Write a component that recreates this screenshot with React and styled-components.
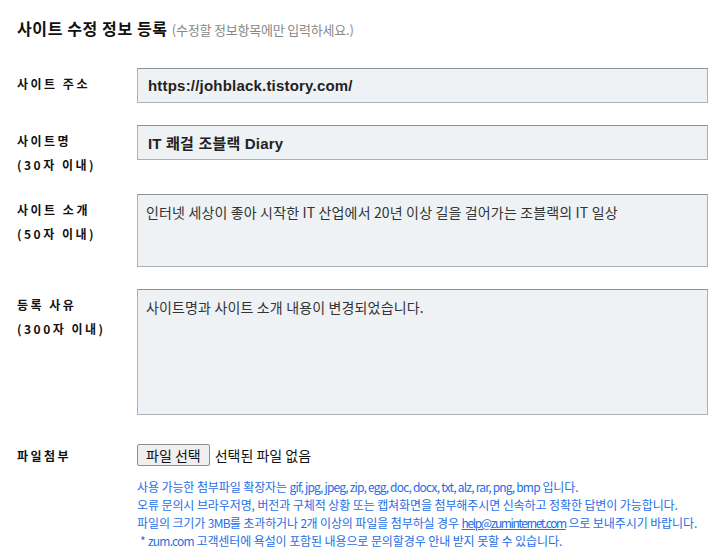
import React from "react";
import styled, { createGlobalStyle } from "styled-components";

const Global = createGlobalStyle`
  html, body { margin: 0; padding: 0; background: #fff; overflow: hidden; }
  body { font-family: "Noto Sans CJK KR", "Noto Sans", sans-serif; color: #111; }
`;

const Page = styled.div`
  padding: 18px 15px 0 17px;
`;

const Title = styled.h2`
  margin: 0 0 28px;
  font-size: 16px;
  line-height: 20px;
  font-weight: 700;
  color: #111;
  letter-spacing: 0.6px;
`;

const Sub = styled.span`
  font-size: 13px;
  font-weight: 400;
  color: #888;
  letter-spacing: -0.2px;
`;

const Row = styled.div`
  display: grid;
  grid-template-columns: 120px 1fr;
  margin-bottom: ${(p) => p.$gap}px;
`;

const Label = styled.div`
  padding-top: ${(p) => (p.$top ?? 4)}px;
  font-size: 12px;
  line-height: 24px;
  font-weight: 700;
  letter-spacing: 2.5px;
  color: #111;
`;

const Field = styled.input`
  box-sizing: border-box;
  width: 100%;
  height: 35px;
  margin: 0;
  padding: 0 10px;
  border: 1px solid #aab0b6;
  border-top-color: #8e9297;
  background: #eef2f5;
  font-family: "Liberation Sans", "Noto Sans CJK KR", sans-serif;
  font-size: 15px;
  font-weight: 700;
  letter-spacing: 0.2px;
  color: #222;
  outline: none;
`;

const Area = styled.textarea`
  display: block;
  box-sizing: border-box;
  width: 100%;
  height: ${(p) => p.$h}px;
  margin: 0;
  padding: 7px 8px;
  border: 1px solid #aab0b6;
  border-top-color: #8e9297;
  background: #eef2f5;
  font-family: "Noto Sans CJK KR", sans-serif;
  font-size: 14px;
  line-height: 20px;
  letter-spacing: 0.15px;
  color: #333;
  resize: none;
  outline: none;
`;

const FileLine = styled.div`
  display: flex;
  align-items: center;
  gap: 5px;
  font-size: 14px;
  color: #111;
`;

const FileButton = styled.button`
  box-sizing: border-box;
  height: 22px;
  padding: 0 8px;
  border: 1px solid #8f8f8f;
  border-radius: 2px;
  background: #efefef;
  font-family: "Noto Sans CJK KR", sans-serif;
  font-size: 14px;
  color: #111;
`;

const Notes = styled.div`
  margin-top: 12px;
  font-size: 12px;
  line-height: 18px;
  color: #1e6ee8;
  letter-spacing: -0.1px;
`;

const Note = styled.div`
  padding-left: ${(p) => (p.$indent ? 3 : 0)}px;
  white-space: nowrap;
`;

const Latin = styled.span`
  letter-spacing: -0.8px;
`;

const Mail = styled.span`
  letter-spacing: -1.4px;
  text-decoration: underline;
`;

export default function App() {
  return (
    <>
      <Global />
      <Page>
        <Title>
          사이트 수정 정보 등록 <Sub>(수정할 정보항목에만 입력하세요.)</Sub>
        </Title>

        <Row $gap={22}>
          <Label>사이트 주소</Label>
          <Field readOnly defaultValue="https://johblack.tistory.com/" />
        </Row>

        <Row $gap={17}>
          <Label>
            사이트명
            <br />
            (30자 이내)
          </Label>
          <Field readOnly defaultValue="IT 쾌걸 조블랙 Diary" />
        </Row>

        <Row $gap={22}>
          <Label>
            사이트 소개
            <br />
            (50자 이내)
          </Label>
          <Area
            $h={73}
            readOnly
            defaultValue="인터넷 세상이 좋아 시작한 IT 산업에서 20년 이상 길을 걸어가는 조블랙의 IT 일상"
          />
        </Row>

        <Row $gap={29}>
          <Label>
            등록 사유
            <br />
            (300자 이내)
          </Label>
          <Area
            $h={126}
            readOnly
            defaultValue="사이트명과 사이트 소개 내용이 변경되었습니다."
          />
        </Row>

        <Row $gap={0}>
          <Label $top={0}>파일첨부</Label>
          <div>
            <FileLine>
              <FileButton type="button">파일 선택</FileButton>
              <span>선택된 파일 없음</span>
            </FileLine>
            <Notes>
              <Note>
                사용 가능한 첨부파일 확장자는{" "}
                <Latin>gif, jpg, jpeg, zip, egg, doc, docx, txt, alz, rar, png, bmp</Latin> 입니다.
              </Note>
              <Note>
                오류 문의시 브라우저명, 버전과 구체적 상황 또는 캡쳐화면을 첨부해주시면 신속하고 정확한 답변이 가능합니다.
              </Note>
              <Note>
                파일의 크기가 <Latin>3MB</Latin>를 초과하거나 <Latin>2</Latin>개 이상의 파일을 첨부하실 경우{" "}
                <Mail>help@zuminternet.com</Mail> 으로 보내주시기 바랍니다.
              </Note>
              <Note $indent>
                * <Latin>zum.com</Latin> 고객센터에 욕설이 포함된 내용으로 문의할경우 안내 받지 못할 수 있습니다.
              </Note>
            </Notes>
          </div>
        </Row>
      </Page>
    </>
  );
}
